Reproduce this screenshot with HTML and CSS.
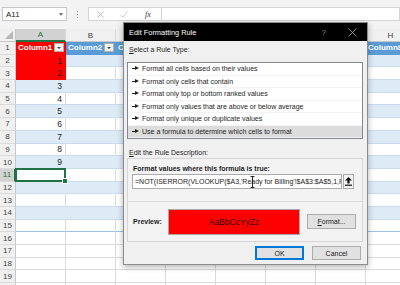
FILE: index.html
```html
<!DOCTYPE html>
<html lang="en">
<head>
    <meta charset="UTF-8">
    <meta name="viewport" content="width=device-width, initial-scale=1.0">
    <title>Edit Formatting Rule</title>
    <link rel="stylesheet" href="styles.css">
</head>
<body>
<div class="app">
    <!-- name box + formula bar -->
    <div class="formula-bar">
        <div class="name-box"><span>A11</span><span class="caret"></span></div>
        <div class="grip"><i></i><i></i><i></i></div>
        <div class="fx-btns">
            <svg class="ico-x" width="7" height="7" viewBox="0 0 7 7"><path d="M0.5 0.5L6.5 6.5M6.5 0.5L0.5 6.5" stroke="#b4b4b4" stroke-width="0.9"/></svg>
            <svg class="ico-ok" width="8" height="7" viewBox="0 0 8 7"><path d="M0.5 3.8L2.8 6.2L7.5 0.6" fill="none" stroke="#c4c4c4" stroke-width="0.9"/></svg>
            <span class="fx">fx</span>
        </div>
        <div class="fx-input"></div>
    </div>

    <!-- worksheet, cells are filled in by the script below -->
    <div class="sheet" id="sheet"></div>

    <!-- the dialog sits over the sheet -->
    <div class="dialog">
        <div class="dlg-title">
            <span class="dlg-name">Edit Formatting Rule</span>
            <span class="dlg-help">?</span>
            <svg class="dlg-close" width="9" height="9" viewBox="0 0 9 9"><path d="M0.5 0.5L8.5 8.5M8.5 0.5L0.5 8.5" stroke="#9a9a9a" stroke-width="0.9"/></svg>
        </div>
        <div class="dlg-body">
            <div class="lbl"><u>S</u>elect a Rule Type:</div>
            <ul class="rule-list">
                <li><i class="arrow"></i>Format all cells based on their values</li>
                <li><i class="arrow"></i>Format only cells that contain</li>
                <li><i class="arrow"></i>Format only top or bottom ranked values</li>
                <li><i class="arrow"></i>Format only values that are above or below average</li>
                <li><i class="arrow"></i>Format only unique or duplicate values</li>
                <li class="picked"><i class="arrow"></i>Use a formula to determine which cells to format</li>
            </ul>
            <div class="lbl lbl-edit"><u>E</u>dit the Rule Description:</div>
            <div class="desc">
                <div class="desc-head">Format values where this formula is true:</div>
                <div class="formula-row">
                    <div class="formula">=NOT(ISERROR(VLOOKUP($A3,'Ready for Billing'!$A$3:$A$5,1,FALSE)))</div>
                    <div class="collapse-btn">
                        <svg width="7" height="9" viewBox="0 0 7 9"><path d="M3.5 0L7 3.6H4.6V6.6H2.4V3.6H0Z" fill="#111"/><rect x="0" y="7.6" width="7" height="1.2" fill="#111"/></svg>
                    </div>
                    <svg class="ibeam" width="5" height="12" viewBox="0 0 5 12"><path d="M0.5 0.5H4.5M2.5 0.5V11.5M0.5 11.5H4.5" stroke="#111" stroke-width="0.9" fill="none"/></svg>
                </div>
                <div class="preview-row">
                    <span class="preview-lbl">Preview:</span>
                    <div class="preview-box">AaBbCcYyZz</div>
                    <div class="btn fmt-btn"><u>F</u>ormat...</div>
                </div>
            </div>
            <div class="dlg-foot">
                <div class="btn btn-ok">OK</div>
                <div class="btn btn-cancel">Cancel</div>
            </div>
        </div>
    </div>
</div>

<script>
    var sheet = document.getElementById('sheet')
    var cols = ['A','B','C','D','E','F','G','H']

    function cell(cls, text){
        var d = document.createElement('div')
        d.className = cls
        if(text !== undefined && text !== '') d.textContent = text
        sheet.appendChild(d)
        return d
    }

    // column letters
    cell('corner')
    for(var c = 0; c < cols.length; c++){
        cell(c == 0 ? 'colhead active' : 'colhead', cols[c])
    }

    // rows 1..20, the table runs from row 1 to row 15
    for(var r = 1; r <= 20; r++){
        cell(r == 11 ? 'rowhead active' : 'rowhead', r)
        for(var c = 0; c < cols.length; c++){
            var cls = 'cell'
            var text = ''
            if(r == 1){
                cls += c == 0 ? ' th th-red' : ' th'
            }else if(r <= 15){
                cls += r % 2 == 0 ? ' band' : ' plain'
                if(r == 15) cls += ' last'
                if(c == 0 && r <= 3) cls += ' hit'
                if(c == 0 && r <= 10) text = r - 1
            }
            if(r == 11 && c == 0) cls += ' sel'
            var d = cell(cls, text)
            if(r == 1){
                d.innerHTML = '<span>Column' + (c + 1) + '</span><span class="dd"></span>'
            }
        }
    }
</script>
</body>
</html>
```

FILE: styles.css
```css
* {
    box-sizing: border-box;
}

body {
    margin: 0;
    width: 400px;
    height: 285px;
    overflow: hidden;
    background: #fff;
    font-family: "Liberation Sans", Arial, sans-serif;
}

.app {
    position: relative;
    width: 400px;
    height: 285px;
    overflow: hidden;
}

/* ---------- formula bar ---------- */
.formula-bar {
    display: flex;
    align-items: center;
    height: 29px;
    padding: 0 0 1px 2px;
    background: #f3f3f3;
}

.name-box {
    display: flex;
    align-items: center;
    justify-content: space-between;
    width: 65px;
    height: 14px;
    padding: 0 3px;
    background: #fff;
    border: 1px solid #c6c6c6;
    font-size: 8px;
    color: #222;
}

.caret {
    border-left: 2.5px solid transparent;
    border-right: 2.5px solid transparent;
    border-top: 3px solid #777;
}

.grip {
    display: flex;
    flex-direction: column;
    gap: 2px;
    margin-left: 10px;
}

.grip i {
    width: 1px;
    height: 1px;
    background: #9a9a9a;
}

.fx-btns {
    display: flex;
    align-items: center;
    width: 73px;
    height: 14px;
    margin-left: 10px;
    padding-left: 8px;
    background: #fff;
    border: 1px solid #d4d4d4;
    border-right: none;
}

.ico-ok {
    margin-left: 16px;
}

.fx {
    margin-left: 17px;
    font-family: "Liberation Serif", serif;
    font-style: italic;
    font-size: 8px;
    color: #333;
}

.fx-input {
    flex: 1;
    height: 14px;
    background: #fff;
    border: 1px solid #d4d4d4;
}

/* ---------- sheet ---------- */
.sheet {
    display: grid;
    grid-template-columns: 16px repeat(8, 50px);
    grid-template-rows: 13px;
    grid-auto-rows: 12.7px;
    font-size: 8px;
    color: #222;
}

.corner {
    display: flex;
    align-items: flex-end;
    justify-content: flex-end;
    padding: 0 2px 2px 0;
    background: #f0f0f0;
    border-right: 1px solid #c8c8c8;
    border-bottom: 1px solid #c8c8c8;
}

.corner::after {
    content: "";
    border-style: solid;
    border-width: 0 0 8px 8px;
    border-color: transparent transparent #b9b9b9 transparent;
}

.colhead {
    display: flex;
    align-items: center;
    justify-content: center;
    background: #f0f0f0;
    border-right: 1px solid #dadada;
    border-bottom: 1px solid #c8c8c8;
    color: #444;
}

.colhead.active {
    background: #d2d2d2;
    color: #217346;
    border-bottom: 2px solid #217346;
}

.rowhead {
    display: flex;
    align-items: center;
    justify-content: center;
    background: #f0f0f0;
    border-right: 1px solid #c8c8c8;
    border-bottom: 1px solid #dadada;
    color: #444;
}

.rowhead.active {
    background: #d2d2d2;
    color: #217346;
    border-right: 2px solid #217346;
}

.cell {
    display: flex;
    align-items: center;
    justify-content: flex-end;
    padding-right: 3px;
    background: #fff;
    border-right: 1px solid #dadada;
    border-bottom: 1px solid #dadada;
    font-size: 8.5px;
}

.th {
    justify-content: space-between;
    padding: 0 1px 0 2px;
    background: #5b9bd5;
    border-right-color: #5b9bd5;
    border-bottom-color: #5b9bd5;
    color: #fff;
    font-weight: bold;
    font-size: 8px;
    white-space: nowrap;
    overflow: hidden;
}

.th-red {
    background: #ff0000;
    border-right-color: #ff0000;
    border-bottom-color: #ff0000;
}

.dd {
    display: flex;
    align-items: center;
    justify-content: center;
    flex: none;
    width: 10px;
    height: 9px;
    background: #f2f2f2;
    border: 1px solid #b0b0b0;
}

.dd::after {
    content: "";
    border-left: 2px solid transparent;
    border-right: 2px solid transparent;
    border-top: 2.5px solid #444;
}

.band {
    background: #ddebf7;
    border-right-color: #ddebf7;
    border-bottom-color: #c9dcef;
}

.plain {
    border-bottom-color: #c9dcef;
}

.last {
    border-bottom-color: #9bc2e6;
}

.hit {
    background: #ff0000;
    border-right-color: #ff0000;
    border-bottom-color: #ff0000;
}

.sel {
    position: relative;
}

/* green frame + fill handle of the active cell */
.sel::after {
    content: "";
    position: absolute;
    top: -1px;
    left: -1px;
    right: -1px;
    bottom: -1px;
    border: 2px solid #217346;
}

.sel::before {
    content: "";
    position: absolute;
    right: -3px;
    bottom: -3px;
    width: 4px;
    height: 4px;
    background: #217346;
    border: 1px solid #fff;
    z-index: 1;
}

/* ---------- dialog ---------- */
.dialog {
    position: absolute;
    left: 123px;
    top: 22px;
    width: 245px;
    height: 243px;
    background: #f0f0f0;
    border: 1px solid #8c8c8c;
    box-shadow: 0 2px 6px rgba(0, 0, 0, 0.3);
    font-size: 7px;
    color: #1e1e1e;
}

.dlg-title {
    display: flex;
    align-items: center;
    height: 18px;
    padding: 0 10px 0 5px;
    background: #000;
    color: #fff;
}

.dlg-name {
    flex: 1;
    font-size: 7.4px;
}

.dlg-help {
    margin-right: 22px;
    color: #8c8c8c;
    font-size: 8px;
}

.dlg-body {
    padding: 0 4px 0 3px;
}

.lbl {
    height: 12px;
    margin-top: 3px;
    padding-left: 2px;
    line-height: 12px;
}

.rule-list {
    height: 77px;
    margin: 6px 0 0 0;
    padding: 0;
    list-style: none;
    background: #fff;
    border: 1px solid #828790;
}

.rule-list li {
    display: flex;
    align-items: center;
    height: 12.5px;
    padding-left: 4px;
    border-bottom: 1px solid #f3f3f3;
    white-space: nowrap;
}

.rule-list li.picked {
    background: #dcdcdc;
}

.arrow {
    position: relative;
    width: 7px;
    height: 5px;
    margin-right: 3px;
}

.arrow::before {
    content: "";
    position: absolute;
    left: 0;
    top: 2px;
    width: 3px;
    height: 1px;
    background: #222;
}

.arrow::after {
    content: "";
    position: absolute;
    left: 3px;
    top: 0;
    border-top: 2.5px solid transparent;
    border-bottom: 2.5px solid transparent;
    border-left: 4px solid #222;
}

.lbl-edit {
    height: 11px;
    margin-top: 8px;
    line-height: 11px;
}

.desc {
    height: 84px;
    border: 1px solid #d6d6d6;
    background: #f3f3f3;
}

.desc-head {
    height: 11px;
    padding: 1px 0 0 5px;
    margin-top: 4px;
    font-weight: bold;
    line-height: 10px;
}

.formula-row {
    position: relative;
    display: flex;
    height: 15px;
    margin: 0 8px 0 4px;
}

.formula {
    flex: 1;
    overflow: hidden;
    white-space: nowrap;
    padding: 0 2px;
    line-height: 13px;
    background: #fff;
    border: 1px solid #ababab;
}

.collapse-btn {
    display: flex;
    align-items: center;
    justify-content: center;
    width: 11px;
    margin-left: 1px;
    background: #f4f4f4;
    border: 1px solid #ababab;
}

/* mouse cursor over the formula text */
.ibeam {
    position: absolute;
    left: 118px;
    top: 2px;
}

.preview-row {
    display: flex;
    align-items: center;
    height: 40px;
    margin-top: 12px;
    padding: 0 6px 0 5px;
    border-top: 1px solid #dcdcdc;
}

.preview-lbl {
    width: 35px;
    font-weight: bold;
}

.preview-box {
    display: flex;
    align-items: center;
    justify-content: center;
    width: 132px;
    height: 26px;
    background: #ff0000;
    border: 1px solid #a8a8a8;
    color: #300;
    font-size: 8.5px;
}

.btn {
    display: flex;
    align-items: center;
    justify-content: center;
    height: 15px;
    background: #e1e1e1;
    border: 1px solid #adadad;
    color: #222;
}

.fmt-btn {
    width: 49px;
    margin-left: 7px;
}

.dlg-foot {
    display: flex;
    justify-content: flex-end;
    gap: 8px;
    margin-top: 4px;
    padding-right: 2px;
}

.btn-ok,
.btn-cancel {
    width: 49px;
    height: 14px;
}

.btn-ok {
    border: 1px solid #0078d7;
    box-shadow: inset 0 0 0 1px #0078d7;
}
```
